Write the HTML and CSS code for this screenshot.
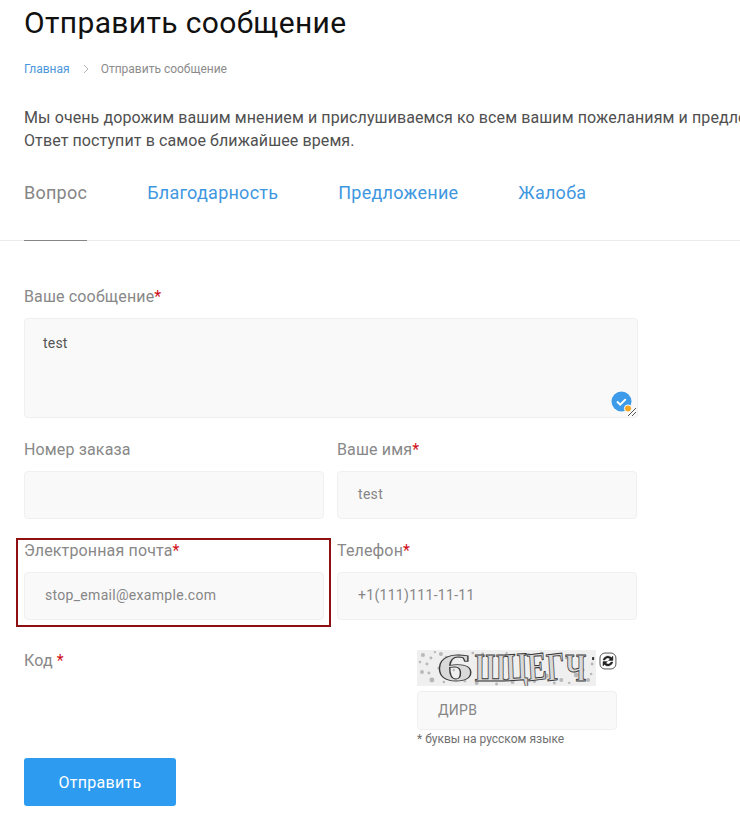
FILE: index.html
```html
<!DOCTYPE html>
<html lang="ru">
<head>
<meta charset="utf-8">
<title>Отправить сообщение</title>
<link rel="stylesheet" href="styles.css">
</head>
<body>
<main class="page">
  <h1 class="title">Отправить сообщение</h1>
  <nav class="crumbs">
    <a class="crumb-link">Главная</a>
    <svg class="crumb-sep" width="8" height="10" viewBox="0 0 8 10"><path d="M2 1l4 4-4 4" fill="none" stroke="#b5b5b5" stroke-width="1"/></svg>
    <span class="crumb-current">Отправить сообщение</span>
  </nav>
  <p class="intro">Мы очень дорожим вашим мнением и прислушиваемся ко всем вашим пожеланиям и предложениям.<br>Ответ поступит в самое ближайшее время.</p>
  <div class="tabs">
    <a class="tab tab-active">Вопрос</a>
    <a class="tab">Благодарность</a>
    <a class="tab">Предложение</a>
    <a class="tab">Жалоба</a>
  </div>
  <form class="form">
    <div class="field field-wide">
      <label class="label">Ваше сообщение<span class="req">*</span></label>
      <div class="textarea">
        test
        <svg class="grammar" width="26" height="26" viewBox="0 0 26 26">
          <circle cx="10.500" cy="10.500" r="10" fill="#3d9be9"/>
          <path d="M6 10.500l3.200 3.200 5.600-5.600" fill="none" stroke="#fff" stroke-width="2"/>
          <circle cx="17" cy="17.500" r="3.600" fill="#f5a623" stroke="#fff" stroke-width="1"/>
          <path d="M17 25l8-8M21 25l4-4" fill="none" stroke="#555" stroke-width="1"/>
        </svg>
      </div>
    </div>
    <div class="row">
      <div class="field">
        <label class="label">Номер заказа</label>
        <div class="input"></div>
      </div>
      <div class="field">
        <label class="label">Ваше имя<span class="req">*</span></label>
        <div class="input">test</div>
      </div>
    </div>
    <div class="row">
      <div class="field field-flagged">
        <label class="label">Электронная почта<span class="req">*</span></label>
        <div class="input">stop_email@example.com</div>
      </div>
      <div class="field">
        <label class="label">Телефон<span class="req">*</span></label>
        <div class="input">+1(111)111-11-11</div>
      </div>
    </div>
    <div class="captcha-row">
      <label class="label">Код <span class="req">*</span></label>
      <div class="captcha">
        <div class="captcha-top">
          <svg class="captcha-img" width="180" height="36" viewBox="0 0 180 36">
            <rect width="180" height="36" fill="#efefef"/>
            <g fill="#b8b8b8">
              <circle cx="6" cy="5" r="2"/><circle cx="14" cy="8" r="1.500"/><circle cx="24" cy="4" r="2"/><circle cx="5" cy="22" r="2"/><circle cx="15" cy="30" r="2.500"/>
              <circle cx="32" cy="28" r="2"/><circle cx="22" cy="18" r="1.500"/><circle cx="42" cy="6" r="2"/><circle cx="96" cy="32" r="2"/><circle cx="104" cy="27" r="1.500"/>
              <circle cx="118" cy="31" r="2"/><circle cx="130" cy="26" r="2.500"/><circle cx="145" cy="30" r="2"/><circle cx="160" cy="25" r="2.500"/><circle cx="172" cy="30" r="2"/>
              <circle cx="176" cy="14" r="1.500"/><circle cx="66" cy="4" r="1.500"/><circle cx="112" cy="5" r="2"/><circle cx="150" cy="8" r="1.500"/><circle cx="60" cy="33" r="2"/>
              <circle cx="10" cy="14" r="1.500"/><circle cx="34" cy="12" r="1.500"/><circle cx="80" cy="34" r="1.500"/><circle cx="167" cy="20" r="1.500"/>
              <circle cx="29" cy="7" r="1.200"/><circle cx="3" cy="12" r="1.200"/><circle cx="12" cy="23" r="1.500"/><circle cx="27" cy="32" r="1.300"/><circle cx="48" cy="31" r="1.500"/>
              <circle cx="70" cy="30" r="1.300"/><circle cx="138" cy="33" r="1.500"/><circle cx="153" cy="33" r="1.200"/><circle cx="175" cy="24" r="1.300"/><circle cx="110" cy="33" r="1.300"/>
              <circle cx="18" cy="2" r="1.200"/><circle cx="37" cy="20" r="1.200"/><circle cx="56" cy="3" r="1.300"/><circle cx="90" cy="3" r="1.200"/><circle cx="125" cy="3" r="1.300"/>
            </g>
            <text class="captcha-text captcha-six" transform="translate(20 31) scale(1.800 1)">6</text>
            <text class="captcha-text" x="58" y="31" textLength="112" lengthAdjust="spacingAndGlyphs" rotate="0 -3 -5 -5 0">ШЦЕГЧ</text>
            <rect x="176" y="7" width="2" height="3" fill="#333"/>
          </svg>
          <svg class="captcha-refresh" width="18" height="18" viewBox="0 0 18 18">
            <rect x="1" y="1" width="16" height="16" rx="5" fill="#fff" stroke="#555" stroke-width="1"/>
            <path d="M4 8a5 5 0 0 1 8.500-2.500L14 4v4.500H9.500l1.600-1.600A3 3 0 0 0 6 8zM14 10a5 5 0 0 1-8.500 2.500L4 14V9.500h4.500L6.900 11.100A3 3 0 0 0 12 10z" fill="#222" stroke="#222" stroke-width="0.400"/>
          </svg>
        </div>
        <div class="input input-captcha">ДИРВ</div>
        <div class="hint">* буквы на русском языке</div>
      </div>
    </div>
    <button type="button" class="submit">Отправить</button>
  </form>
</main>
</body>
</html>
```
FILE: styles.css
```css
* { box-sizing: border-box; }
html, body { margin: 0; padding: 0; background: #fff; }
body { width: 740px; height: 833px; overflow: hidden; font-family: Roboto, "Noto Sans", sans-serif; }
.page { display: flex; flex-direction: column; }
.title { margin: 5px 0 0 24px; font-size: 30px; line-height: 36px; font-weight: 400; color: #111; letter-spacing: 0.35px; white-space: nowrap; }
.crumbs { display: flex; align-items: center; margin: 20px 0 0 24px; height: 16px; font-size: 12px; line-height: 16px; }
.crumb-link { color: #4a96da; }
.crumb-sep { margin: 0 11px 0 12px; }
.crumb-current { color: #8c8c8c; }
.intro { margin: 29px 0 0 24px; width: 900px; font-size: 16px; line-height: 23px; color: #505050; letter-spacing: 0.1px; white-space: nowrap; }
.tabs { display: flex; gap: 60px; padding-left: 24px; margin-top: 20px; height: 69px; border-bottom: 1px solid #ececec; }
.tab { display: block; font-size: 18px; line-height: 26px; padding-top: 8px; height: 69px; color: #3f97e0; letter-spacing: 0.25px; }
.tab-active { color: #868686; border-bottom: 1px solid #868686; }
.form { display: flex; flex-direction: column; padding: 44px 0 0 24px; width: 638px; }
.field { position: relative; display: flex; flex-direction: column; }
.row { display: grid; grid-template-columns: 300px 300px; column-gap: 13px; margin-top: 20px; }
.label { display: block; height: 24px; font-size: 16px; line-height: 24px; color: #888; margin-bottom: 9px; letter-spacing: 0.15px; }
.req { color: #d0101a; }
.input, .textarea { border: 1px solid #f0f0f0; background: #f9f9f9; border-radius: 4px; color: #868686; }
.input { height: 48px; padding: 0 20px; font-size: 14px; line-height: 44px; letter-spacing: 0.3px; }
.textarea { position: relative; height: 100px; padding: 14px 18px; font-size: 14px; line-height: 20px; color: #555; letter-spacing: 0.2px; }
.grammar { position: absolute; right: 0; bottom: 0; }
.field-flagged::after { content: ""; position: absolute; left: -8px; right: -7px; top: -1px; bottom: -7px; border: 2px solid #8f1010; }
.captcha-row { display: flex; margin-top: 29px; }
.captcha-row .label { width: 393px; margin: 0; }
.captcha { display: flex; flex-direction: column; width: 200px; margin-top: 1px; }
.captcha-top { display: flex; align-items: flex-start; gap: 3px; height: 36px; }
.captcha-text { font-family: "Liberation Serif", serif; font-size: 40px; font-weight: 700; fill: #d9d9d9; stroke: #3a3a3a; stroke-width: 1; }
.captcha-six { stroke-width: 0.800; }
.captcha-refresh { margin-top: 2px; }
.input-captcha { height: 39px; margin-top: 5px; line-height: 36px; }
.hint { margin-top: 1px; font-size: 12px; line-height: 16px; color: #707070; letter-spacing: 0; }
.submit { width: 152px; height: 48px; margin-top: 11px; border: 0; border-radius: 3px; background: #2d9cf0; color: #fff; font: 400 16px Roboto, sans-serif; letter-spacing: 0.3px; }
```
